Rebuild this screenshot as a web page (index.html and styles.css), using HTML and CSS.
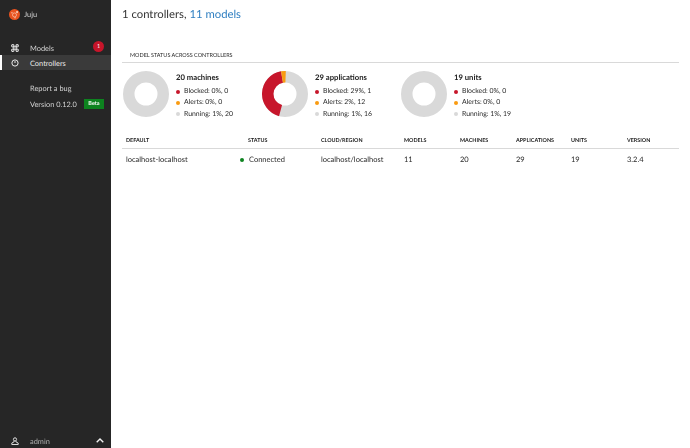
FILE: index.html
```html
<!DOCTYPE html>
<html lang="en">
<head>
<meta charset="utf-8">
<title>Juju</title>
<link rel="stylesheet" href="styles.css">
</head>
<body>
<div class="app">
  <aside class="side">
    <div class="side-inner">
      <div class="brand">
        <svg class="logo" viewBox="0 0 12 12"><circle cx="6" cy="6" r="6" fill="#e95420"/><circle cx="6" cy="6.500" r="2.200" fill="none" stroke="#f9b9a0" stroke-width=".9"/><circle cx="8.800" cy="3.400" r="1.100" fill="#fbd3c2"/><circle cx="3.200" cy="4.200" r=".8" fill="#f9b9a0"/><circle cx="6.600" cy="9.600" r=".8" fill="#f9b9a0"/></svg>
        <span>Juju</span>
      </div>
      <nav class="nav">
        <a class="item">
          <svg class="icon" viewBox="0 0 10 10"><g fill="none" stroke="#e6e6e6" stroke-width="1.300"><circle cx="2.300" cy="2.300" r="1.500"/><circle cx="7.700" cy="2.300" r="1.500"/><circle cx="2.300" cy="7.700" r="1.500"/><circle cx="7.700" cy="7.700" r="1.500"/><path d="M3.500 3.500h3v3h-3z"/></g></svg>
          <span class="label">Models</span><span class="count">1</span>
        </a>
        <a class="item active">
          <svg class="icon" viewBox="0 0 10 10"><g fill="none" stroke="#f2f2f2" stroke-width="1.200"><circle cx="5" cy="5" r="3.900"/><path d="M5 5V2.600"/></g></svg>
          <span class="label">Controllers</span>
        </a>
      </nav>
      <div class="extra">
        <a class="extra-line">Report a bug</a>
        <div class="extra-line version"><span>Version 0.12.0</span><span class="beta">Beta</span></div>
      </div>
      <div class="user">
        <svg class="icon" viewBox="0 0 10 10"><g fill="none" stroke="#e6e6e6" stroke-width="1.200"><circle cx="5" cy="3" r="2"/><path d="M3.800 5v1L1 7.600V9.400h8V7.600L6.200 6V5"/></g></svg>
        <span class="label dim">admin</span>
        <svg class="chev" viewBox="0 0 8 5"><path d="M.7 4.200 4 1l3.300 3.200" fill="none" stroke="#f2f2f2" stroke-width="1.400"/></svg>
      </div>
    </div>
  </aside>
  <main class="main">
    <h1 class="title">1 controllers, <a class="link">11 models</a></h1>
    <section class="summary">
      <h2 class="section-title">MODEL STATUS ACROSS CONTROLLERS</h2>
      <div class="charts">
        <div class="chart">
          <svg class="donut" viewBox="0 0 46 46"><circle cx="23" cy="23" r="17.250" fill="none" stroke="#d9d9d9" stroke-width="11.500"/></svg>
          <div class="legend">
            <h3>20 machines</h3>
            <p><i class="dot red"></i>Blocked: 0%, 0</p>
            <p><i class="dot orange"></i>Alerts: 0%, 0</p>
            <p><i class="dot grey"></i>Running: 1%, 20</p>
          </div>
        </div>
        <div class="chart">
          <svg class="donut" viewBox="0 0 46 46"><g fill="none" stroke-width="11.500"><circle cx="23" cy="23" r="17.250" stroke="#d9d9d9"/><path d="M18.540 39.660A17.250 17.250 0 0 1 20 6.010" stroke="#c7162b"/><path d="M20 6.010A17.250 17.250 0 0 1 23.600 5.760" stroke="#f99b11"/></g></svg>
          <div class="legend">
            <h3>29 applications</h3>
            <p><i class="dot red"></i>Blocked: 29%, 1</p>
            <p><i class="dot orange"></i>Alerts: 2%, 12</p>
            <p><i class="dot grey"></i>Running: 1%, 16</p>
          </div>
        </div>
        <div class="chart">
          <svg class="donut" viewBox="0 0 46 46"><circle cx="23" cy="23" r="17.250" fill="none" stroke="#d9d9d9" stroke-width="11.500"/></svg>
          <div class="legend">
            <h3>19 units</h3>
            <p><i class="dot red"></i>Blocked: 0%, 0</p>
            <p><i class="dot orange"></i>Alerts: 0%, 0</p>
            <p><i class="dot grey"></i>Running: 1%, 19</p>
          </div>
        </div>
      </div>
    </section>
    <table class="table">
      <colgroup><col class="c1"><col class="c2"><col class="c3"><col class="c4"><col class="c5"><col class="c6"><col class="c7"><col class="c8"></colgroup>
      <thead>
        <tr><th>DEFAULT</th><th>STATUS</th><th>CLOUD/REGION</th><th>MODELS</th><th>MACHINES</th><th>APPLICATIONS</th><th>UNITS</th><th>VERSION</th></tr>
      </thead>
      <tbody>
        <tr><td>localhost-localhost</td><td><i class="dot green"></i>Connected</td><td>localhost/localhost</td><td>11</td><td>20</td><td>29</td><td>19</td><td>3.2.4</td></tr>
      </tbody>
    </table>
  </main>
</div>
</body>
</html>
```
FILE: styles.css
```css
* { box-sizing: border-box; }
html, body { margin: 0; height: 100%; }
body { font-family: Lato, "Noto Sans", sans-serif; color: #2a2a2a; background: #fff; font-size: 8px; text-rendering: geometricPrecision; }
.app { display: flex; height: 448px; overflow: hidden; }

.side { width: 111px; flex: none; background: #262626; color: #d4d4d4; font-size: 7.400px; }
.side-inner { height: 100%; display: flex; flex-direction: column; will-change: opacity; opacity: .999; }
.brand { height: 28px; display: flex; align-items: center; gap: 4px; padding-left: 9px; }
.logo { width: 11px; height: 11px; }
.nav { margin-top: 12px; }
.item { height: 15px; display: flex; align-items: center; padding-left: 11px; position: relative; }
.item.active { background: #3b3b3b; border-left: 2px solid #fff; padding-left: 9px; color: #ededed; }
.icon { width: 8px; height: 8px; flex: none; }
.label { margin-left: 11px; padding-top: 1px; }
.dim { color: #b0b0b0; }
.count { position: absolute; right: 7px; top: 1px; width: 11px; height: 11px; border-radius: 50%; background: #c7162b; color: #fff; font-size: 5.500px; display: flex; align-items: center; justify-content: center; }
.extra { margin-top: 11px; padding-left: 30px; }
.extra-line { display: flex; align-items: center; height: 15px; white-space: nowrap; }
.version { justify-content: space-between; padding-right: 7px; padding-top: 1px; }
.beta { background: #0e8420; color: #fff; font-size: 5.500px; font-weight: 700; width: 20px; height: 10px; display: flex; align-items: center; justify-content: center; }
.user { margin-top: auto; height: 15px; display: flex; align-items: center; padding-left: 11px; padding-right: 7px; }
.chev { width: 8px; height: 5px; margin-left: auto; }

.main { flex: 1; padding: 6px 11px 0 11px; min-width: 0; will-change: opacity; opacity: .999; }
.title { margin: 0; font-size: 11.300px; line-height: 17px; font-weight: 400; color: #333; }
.link { color: #2f7fc1; }
.summary { margin-top: 28px; }
.section-title { margin: 0; padding: 0 0 1px 8px; height: 12px; font-size: 5.500px; line-height: 10px; font-weight: 400; border-bottom: 1px solid #d9d9d9; }
.charts { display: flex; padding-top: 8px; }
.chart { width: 139px; display: flex; gap: 7px; padding-left: 1px; }
.donut { width: 46px; height: 46px; flex: none; }
.legend h3 { margin: 0 0 3px; font-size: 7.700px; line-height: 12px; font-weight: 700; color: #222; }
.legend p { margin: 0; height: 11.300px; font-size: 6.900px; line-height: 11.300px; display: flex; align-items: center; }
.dot { width: 4px; height: 4px; border-radius: 50%; display: inline-block; margin: 0 4px 0 0; flex: none; }
.red { background: #c7162b; }
.orange { background: #f99b11; }
.grey { background: #d9d9d9; }
.green { background: #0e8420; margin: 0 5px 0 -8px; }

.table { width: 557px; margin-top: 15px; border-collapse: collapse; table-layout: fixed; }
.c1 { width: 122px; } .c2 { width: 73px; } .c3 { width: 83px; } .c4 { width: 56px; } .c5 { width: 56px; } .c6 { width: 55px; } .c7 { width: 56px; } .c8 { width: 56px; }
.table th { text-align: left; font-size: 5.400px; font-weight: 700; color: #222; height: 14px; padding: 0 0 1px 4px; border-bottom: 1px solid #d9d9d9; }
.table td { font-size: 7.500px; height: 20px; padding: 0 0 0 4px; white-space: nowrap; border-bottom: 0; }
```
